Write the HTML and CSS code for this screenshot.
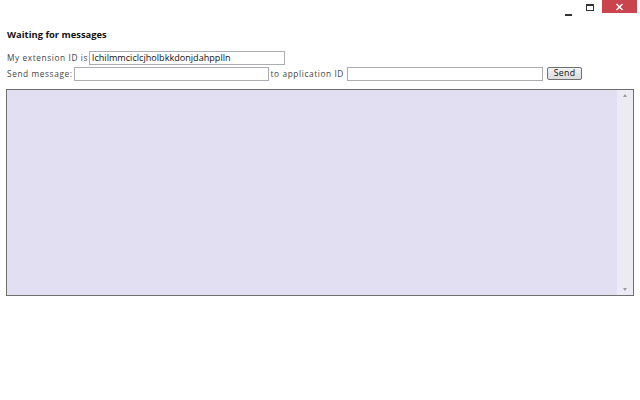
FILE: index.html
```html
<!DOCTYPE html>
<html>
<head>
<meta charset="utf-8">
<link rel="stylesheet" href="styles.css">
</head>
<body>
<div class="titlebar">
  <span class="ctl min"></span>
  <span class="ctl max"></span>
  <span class="close"><svg width="9" height="8" viewBox="0 0 9 8"><path d="M1.5 1 L7.5 7 M7.5 1 L1.5 7" stroke="#fff" stroke-width="1.5"/></svg></span>
</div>
<div class="content">
  <h1 class="heading">Waiting for messages</h1>
  <div class="row row1">
    <span class="label">My extension ID is</span>
    <input class="field idfield" type="text" value="lchilmmciclcjholbkkdonjdahpplln">
  </div>
  <div class="row row2">
    <span class="label">Send message:</span>
    <input class="field msgfield" type="text">
    <span class="label">to application ID</span>
    <input class="field appfield" type="text">
    <button class="send">Send</button>
  </div>
  <div class="log">
    <div class="scroll">
      <span class="arrow up"></span>
      <span class="arrow down"></span>
    </div>
  </div>
</div>
</body>
</html>
```
FILE: styles.css
```css
html, body {
  margin: 0;
  padding: 0;
  background: #ffffff;
  width: 640px;
  height: 400px;
  overflow: hidden;
  font-family: "Open Sans", "DejaVu Sans", sans-serif;
}
.titlebar {
  height: 15px;
  display: flex;
  justify-content: flex-end;
  align-items: flex-start;
  padding-right: 3px;
}
.ctl {
  height: 16px;
  position: relative;
  display: block;
}
.min {
  width: 7px;
  margin-right: 14px;
}
.min::after {
  content: "";
  position: absolute;
  left: 0;
  top: 14px;
  width: 7px;
  height: 2px;
  background: #333;
}
.max {
  width: 8px;
  margin-right: 8px;
}
.max::after {
  content: "";
  position: absolute;
  left: 0;
  top: 4px;
  width: 6px;
  height: 4px;
  border: 1px solid #333;
  border-top-width: 2px;
}
.close {
  width: 35px;
  height: 13px;
  background: #c9444c;
  display: flex;
  align-items: center;
  justify-content: center;
}
.content {
  padding: 0 6px 0 6px;
}
.heading {
  font-size: 9.4px;
  font-weight: bold;
  color: #111;
  margin: 14px 0 0 1px;
  height: 12px;
  line-height: 12px;
}
.row {
  display: flex;
  align-items: center;
  font-size: 8.3px;
  letter-spacing: 0.6px;
  color: #444;
}
.row1 {
  margin-top: 9px;
  height: 15px;
}
.row2 {
  margin-top: 1px;
  height: 15px;
}
.label {
  margin-left: 1px;
  margin-right: 1px;
  white-space: nowrap;
}
.field {
  box-sizing: border-box;
  height: 14px;
  border: 1px solid #abadb3;
  padding: 0 2px;
  margin: 0;
  font-family: "Open Sans", "DejaVu Sans", sans-serif;
  font-size: 9.1px;
  letter-spacing: 0;
  color: #111;
  background: #fff;
  outline: none;
}
.idfield { width: 196px; }
.msgfield { width: 195px; margin-right: 1px; }
.appfield { width: 196px; margin-left: 2px; margin-right: 4px; }
.send {
  box-sizing: border-box;
  width: 35px;
  height: 13px;
  padding: 0;
  margin: 0;
  font-family: "Open Sans", "DejaVu Sans", sans-serif;
  font-size: 8.8px;
  letter-spacing: 0.3px;
  line-height: 11px;
  color: #111;
  border: 1px solid #707070;
  border-radius: 2px;
  background: linear-gradient(#f2f2f2, #dcdcdc);
}
.log {
  box-sizing: border-box;
  margin-top: 8px;
  width: 628px;
  height: 207px;
  border: 1px solid #6f6f6f;
  background: #e2dff3;
  display: flex;
  justify-content: flex-end;
}
.scroll {
  width: 16px;
  background: #eceaf3;
  display: flex;
  flex-direction: column;
  justify-content: space-between;
  align-items: center;
  padding: 4px 0;
}
.arrow {
  width: 0;
  height: 0;
  border-left: 2px solid transparent;
  border-right: 2px solid transparent;
}
.arrow.up { border-bottom: 3px solid #9a9a9a; }
.arrow.down { border-top: 3px solid #9a9a9a; }
```
